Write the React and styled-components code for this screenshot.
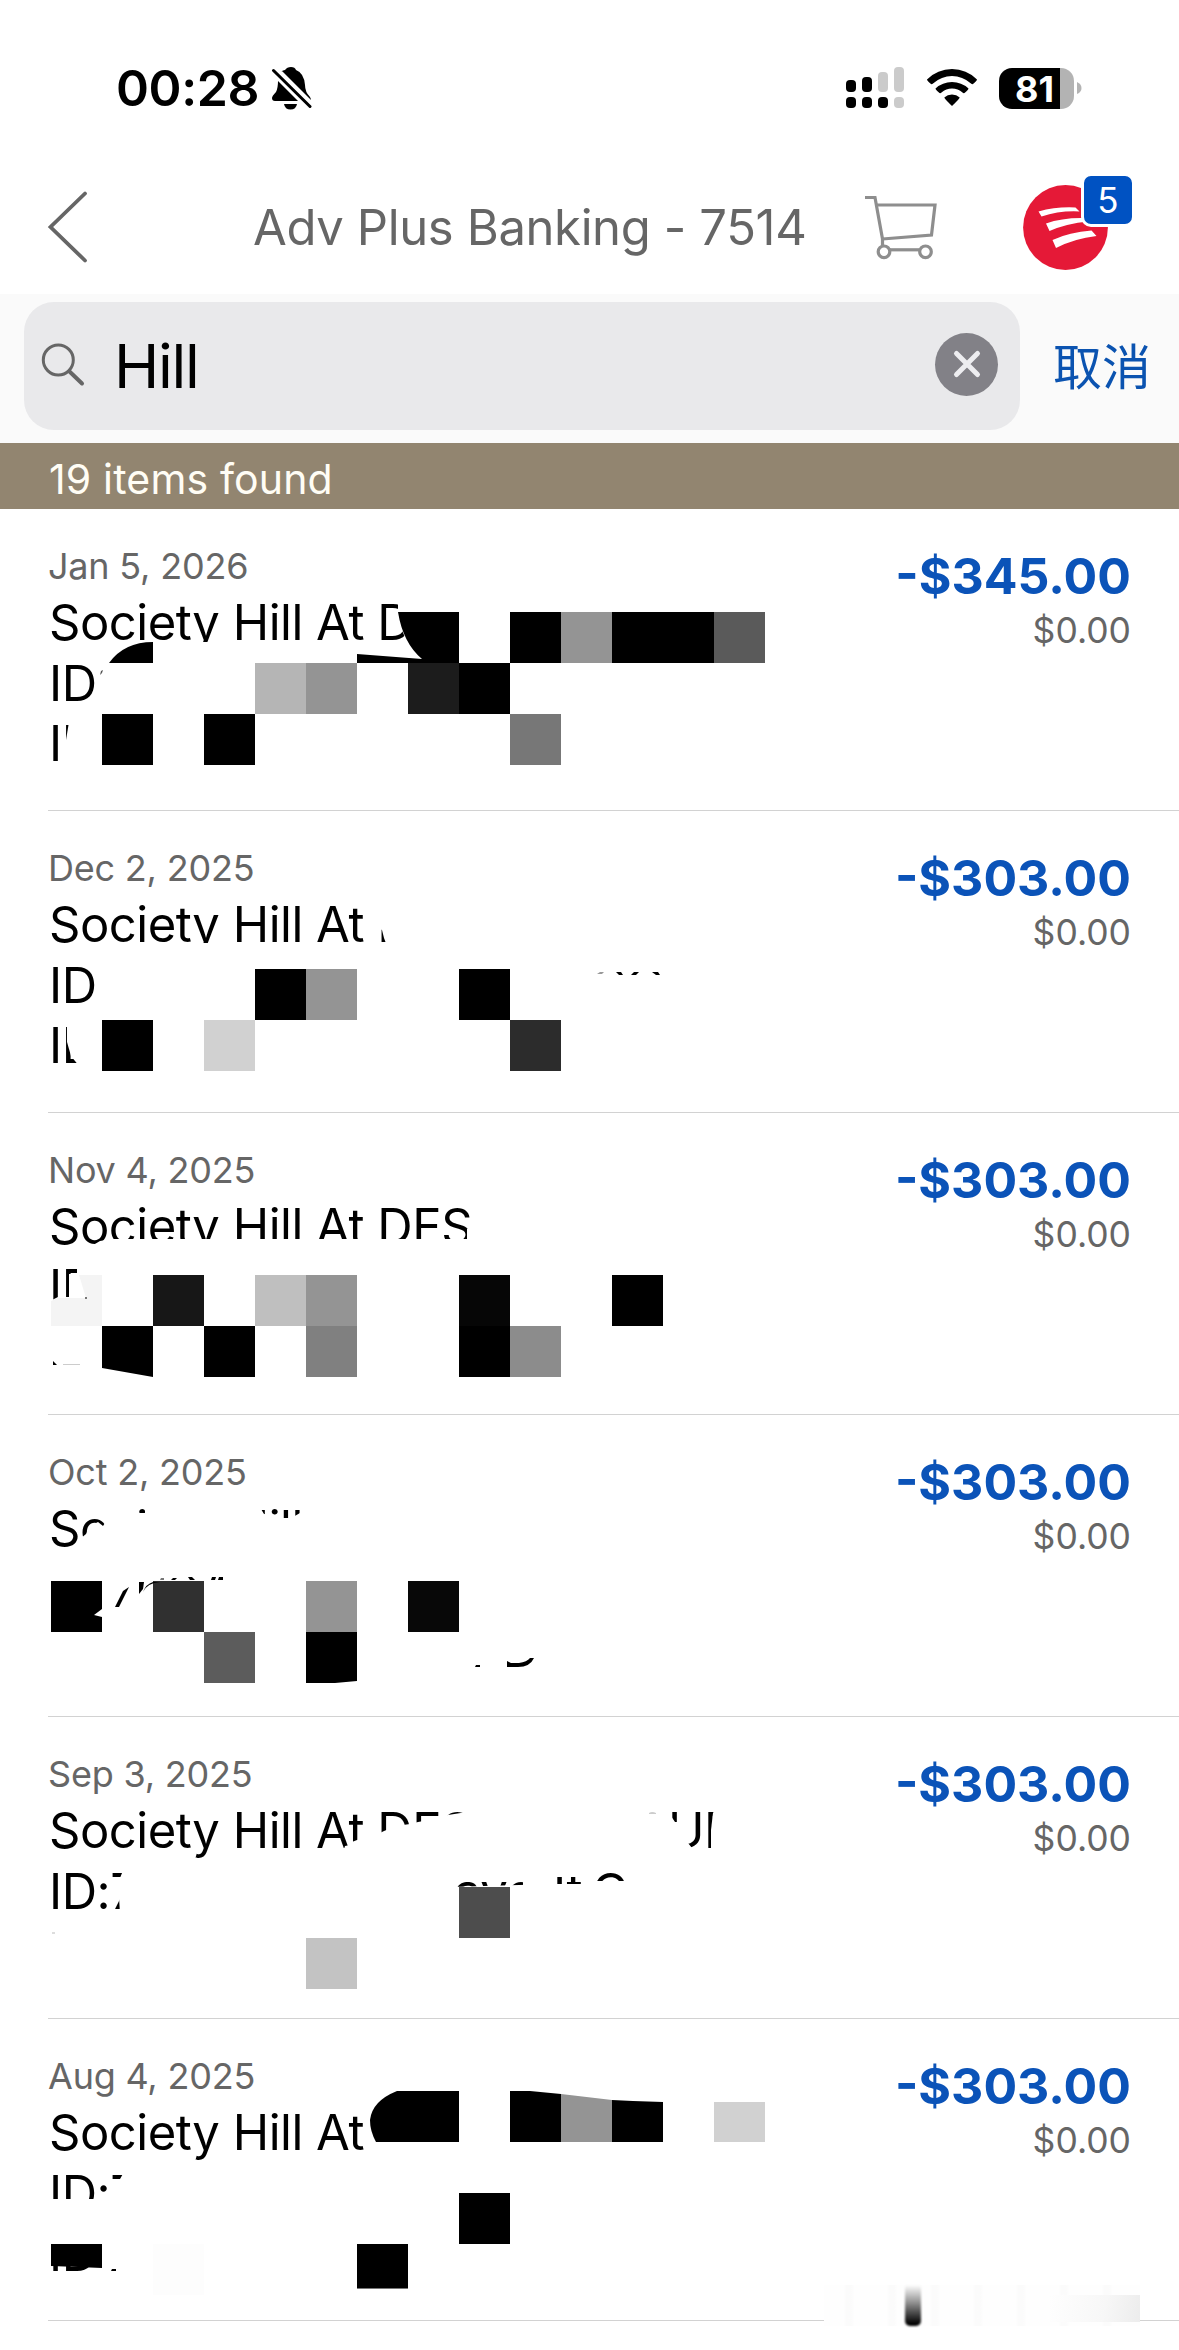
import React from 'react'
import styled, { createGlobalStyle } from 'styled-components'

const CELL = 51;
const LIST_TOP = 509;
const ROW_HEIGHT = 302;

// cells are [x, y, color] on the 51px mosaic grid, covers are painted white over the text
const transactions = [
  {
    date: "Jan 5, 2026",
    amount: "-$345.00",
    balance: "$0.00",
    lines: [[{ text: "Society Hill At D" }], [{ text: "ID" }], [{ text: "ID" }]],
    covers: [
      "190,642 300,642 300,660 190,660",
      "398,598 430,598 430,612 398,612",
      "398,612 401,628 407,642 422,659 430,612",
      "69,722 66,740 65,765 101,765 101,722",
    ],
    cells: [
      [510, 612, "#000"], [561, 612, "#949494"], [612, 612, "#000"], [663, 612, "#000"], [714, 612, "#5a5a5a"],
      [255, 663, "#b5b5b5"], [306, 663, "#949494"], [408, 663, "#1c1c1c"], [459, 663, "#000"],
      [102, 714, "#000"], [204, 714, "#000"], [510, 714, "#777"],
    ],
    shapes: [
      { d: "M109 663Q124 642 153 642V663Z" },
      { d: "M398 612H459V663H357V654L422 659Q403 643 398 612Z" },
      { d: "M100 675L101 671L103 670L102 673Z", fill: "#555" },
    ],
  },
  {
    date: "Dec 2, 2025",
    amount: "-$303.00",
    balance: "$0.00",
    lines: [[{ text: "Society Hill At D" }], [{ text: "ID" }], [{ text: "ID" }]],
    covers: [
      "190,943 300,943 300,962 190,962",
      "378,898 430,898 430,946 387,946 384,938 382,930 378,928",
      "67,1022 67,1042 71,1056 79,1066 101,1066 101,1022",
    ],
    cells: [
      [255, 969, "#000"], [306, 969, "#949494"], [459, 969, "#000"],
      [102, 1020, "#000"], [204, 1020, "#d1d1d1"], [510, 1020, "#2c2c2c"],
    ],
    shapes: [
      { d: "M597 974L600 972H604L602 974Z", fill: "#999" },
      { d: "M616 972L621 972L623 975H619Z" },
      { d: "M634 972H639L636 975H631Z" },
      { d: "M652 972H658L660 975H656Z" },
    ],
  },
  {
    date: "Nov 4, 2025",
    amount: "-$303.00",
    balance: "$0.00",
    lines: [[{ text: "Society Hill At DES" }], [{ text: "ID" }], []],
    covers: [
      "90,1247 100,1241 112,1239 500,1239 500,1264 90,1264",
      "467,1229 480,1229 480,1242 467,1242",
      "77,1264 102,1264 102,1310 50,1310 50,1301 58,1297 69,1297 69,1274 77,1274",
    ],
    cells: [
      [153, 1275, "#171717"], [255, 1275, "#bfbfbf"], [306, 1275, "#949494"], [459, 1275, "#060606"], [612, 1275, "#000"],
      [204, 1326, "#000"], [306, 1326, "#808080"], [459, 1326, "#000"], [510, 1326, "#8c8c8c"],
    ],
    shapes: [
      { d: "M51 1301L58 1298H86L79 1275H102V1326H51Z", fill: "#f4f4f4" },
      { d: "M102 1326H153V1377L102 1368Z" },
      { d: "M53 1361L57 1365H53Z" },
      { d: "M63 1364H80V1365H63Z", fill: "#ccc" },
      { d: "M85 1297H87V1299H85Z", fill: "#777" },
    ],
  },
  {
    date: "Oct 2, 2025",
    amount: "-$303.00",
    balance: "$0.00",
    lines: [[{ text: "Society Hill" }], [], []],
    covers: [
      "80,1539 86,1534 90,1526 98,1522 103,1526 107,1520 107,1500 134,1500 134,1513 145,1513 145,1504 232,1504 234,1510 241,1510 241,1504 258,1504 264,1514 278,1515 281,1518 289,1518 293,1517 300,1513 310,1500 310,1566 80,1566",
    ],
    cells: [
      [153, 1581, "#303030"], [306, 1581, "#949494"], [408, 1581, "#080808"],
      [204, 1632, "#5c5c5c"],
    ],
    shapes: [
      { d: "M51 1581H102V1609L94 1615L102 1617V1632H51Z" },
      { d: "M306 1632H357V1681L335 1683H306Z" },
      { d: "M115 1607L123 1591L129 1587L119 1607Z" },
      { d: "M139 1582H144L143 1589L139 1594Z" },
      { d: "M143 1592Q147 1583 160 1582L153 1582Q146 1584 143 1592Z" },
      { d: "M161 1578H164V1580H160Z", fill: "#777" },
      { d: "M173 1578H177L175 1580H171Z" },
      { d: "M188 1577H192L195 1580H190Z" },
      { d: "M212 1577H216L215 1580H211Z" },
      { d: "M219 1577H223V1580H218Z" },
      { d: "M476 1665H480V1667H475Z" },
      { d: "M507 1661L511 1663H519Q527 1662 530 1658H534Q530 1667 518 1667H507Z" },
    ],
  },
  {
    date: "Sep 3, 2025",
    amount: "-$303.00",
    balance: "$0.00",
    lines: [
      [{ text: "Society Hill At DES" }, { text: "UP", x: 668 }],
      [{ text: "ID:7" }, { text: "aye", x: 454 }, { text: "It", x: 553 }, { text: "C", x: 592 }],
      [],
    ],
    covers: [
      "343,1852 345,1846 350,1845 352,1842 357,1840 364,1838 380,1833 384,1831 396,1826 410,1824 418,1822 440,1818 448,1815 467,1812 474,1804 500,1804 500,1866 343,1866",
      "664,1815 671,1816 675,1822 688,1822 688,1843 692,1848 701,1846 705,1860 664,1860",
      "717,1806 713,1813 711,1830 711,1850 750,1850 750,1806",
      "124,1868 120,1878 110,1878 110,1897 119,1897 120,1914 150,1914 150,1868",
      "450,1887 520,1885 545,1884 545,1930 450,1930",
      "523,1876 545,1876 545,1890 523,1890",
      "550,1868 582,1868 582,1877 550,1877",
      "550,1884 582,1884 582,1916 550,1916",
      "590,1881 640,1881 640,1916 590,1916",
    ],
    cells: [[459, 1887, "#4d4d4d"], [306, 1938, "#c3c3c3"]],
    shapes: [
      { d: "M649 1813Q652 1811 656 1813V1814H649Z", fill: "#ccc" },
      { d: "M52 1932H55V1934H52Z", fill: "#ddd" },
    ],
  },
  {
    date: "Aug 4, 2025",
    amount: "-$303.00",
    balance: "$0.00",
    lines: [[{ text: "Society Hill At" }], [{ text: "ID:7" }], [{ text: "ID" }]],
    covers: [
      "48,2199 98,2199 98,2201 108,2201 108,2195 110,2179 120,2179 124,2172 150,2172 150,2216 48,2216",
      "48,2230 102,2230 102,2244 48,2244",
    ],
    cells: [
      [459, 2193, "#000"], [153, 2244, "#fdfdfd"],
    ],
    shapes: [
      { d: "M397 2091H459V2142H376Q370 2131 370 2120Q372 2101 397 2091Z" },
      { d: "M510 2091H530L561 2094V2142H510Z" },
      { d: "M561 2094L612 2100V2142H561Z", fill: "#949494" },
      { d: "M612 2100L633 2101L663 2102V2142H612Z" },
      { d: "M714 2102H765V2142H714Z", fill: "#d1d1d1" },
      { d: "M51 2244H102V2268L78 2267L51 2266Z" },
      { d: "M357 2244H408V2288H357Z" },
      { d: "M357 2288H408V2289H357Z", fill: "#777" },
      { d: "M112 2269H116V2271H111Z" },
    ],
  },
]

function Mosaic({ item, top }) {
  return (
    <Overlay viewBox={`0 ${top} 820 301`}>
      {item.covers.map((points) => <polygon key={points} points={points} fill="#fff" />)}
      {item.cells.map(([x, y, color]) => (
        <rect key={`${x}-${y}`} x={x} y={y} width={CELL} height={CELL} fill={color} shapeRendering="crispEdges" />
      ))}
      {item.shapes.map(({ d, fill }) => <path key={d} d={d} fill={fill || "#000"} />)}
    </Overlay>
  )
}

function Transaction({ item, index }) {
  return (
    <Row>
      <Details>
        <DateText>{item.date}</DateText>
        {item.lines.map((parts, i) => (
          <Line key={i}>
            {parts.map((part) => <Part key={part.text} $x={part.x}>{part.text}</Part>)}
          </Line>
        ))}
      </Details>
      <Amounts>
        <Amount>{item.amount}</Amount>
        <Balance>{item.balance}</Balance>
      </Amounts>
      <Mosaic item={item} top={LIST_TOP + index * ROW_HEIGHT} />
    </Row>
  )
}

function Status() {
  return (
    <StatusBar>
      <Time>00:28</Time>
      <svg width="42" height="46" viewBox="270 65 42 46">
        <path d="M279 73Q283 70 285 70Q287 67 291 67Q295 67 296 70Q304 73 305 85Q305 92 310 97Q311 99 311 100L282 71Z" />
        <path d="M278 81L298 101H275Q272 101 272 98Q272 96 276 92Q278 88 278 81Z" />
        <path d="M284 104H297Q296 109.500 290.500 109.500Q285 109.500 284 104Z" />
        <path d="M273.500 70.500L310 106.500" stroke="#fff" strokeWidth="6.500" />
        <path d="M273.500 70.500L310 106.500" stroke="#000" strokeWidth="3" strokeLinecap="round" />
      </svg>
      <StatusIcons>
        <svg width="60" height="44" viewBox="845 66 60 44">
          <rect x="846" y="80" width="10" height="12" rx="4" />
          <rect x="862" y="77" width="10" height="15" rx="4" />
          <rect x="878" y="72" width="10" height="20" rx="4" fill="#cbcbcb" />
          <rect x="894" y="67" width="10" height="25" rx="4" fill="#cbcbcb" />
          <rect x="846" y="97" width="10" height="11" rx="4" />
          <rect x="862" y="97" width="10" height="11" rx="4" />
          <rect x="878" y="97" width="10" height="11" rx="4" />
          <rect x="894" y="97" width="10" height="11" rx="4" fill="#cbcbcb" />
        </svg>
        <svg width="52" height="44" viewBox="925.500 66 52 44">
          <path d="M926.500 79.500Q937 69 951.500 69Q966 69 976.500 79.500Q976.500 80.500 972.500 84Q971.500 84.500 970.500 83.500Q962 76 951.500 76Q941 76 932.500 83.500Q931.500 84.500 930.500 84Q926.500 80.500 926.500 79.500Z" />
          <path d="M935 88.500Q942 82 951.500 82Q961 82 968 88.500Q968 89.500 964 93Q963 93.500 962 92.500Q957.500 88.500 951.500 88.500Q945.500 88.500 941 92.500Q940 93.500 939 93Q935 89.500 935 88.500Z" />
          <path d="M943.800 97.500Q947 94.500 951.500 94.500Q956 94.500 959.200 97.500Q959.500 98.300 951.500 106Q943.500 98.300 943.800 97.500Z" />
        </svg>
        <Battery>
          <span>81</span>
          <svg width="5" height="12" viewBox="0 0 5 12"><path d="M0 0Q4.500 2 4.500 6Q4.500 10 0 12Z" fill="#b3b3b3" /></svg>
        </Battery>
      </StatusIcons>
    </StatusBar>
  )
}

function Navigation() {
  return (
    <NavBar>
      <svg width="44" height="76" viewBox="46 188 44 76" fill="none" stroke="#666" strokeWidth="3.800" strokeLinecap="round">
        <path d="M85 192.500L50.500 226L85 259.500" />
      </svg>
      <Title>Adv Plus Banking - 7514</Title>
      <svg width="76" height="66" viewBox="862 194 76 66" fill="none" stroke="#8e8e8e" strokeWidth="3.200">
        <path d="M864 197.500H874L881.500 239V246" />
        <path d="M875.500 205H934L930.500 235L881.500 239" />
        <path d="M889 249.800H918" />
        <circle cx="883" cy="251.800" r="5.800" />
        <circle cx="924.500" cy="251.800" r="5.800" />
      </svg>
      <Profile>
        <svg width="85" height="85" viewBox="1022.500 184.500 85 85">
          <circle cx="1065" cy="227" r="42.400" fill="#e51937" />
          <path d="M1038 211Q1056 206 1075 207L1079 211Q1059 210 1041 216Z" fill="#fff" />
          <path d="M1045.500 223Q1062 217 1084 217.500L1088 221Q1066 223 1049 230.500Z" fill="#fff" />
          <path d="M1052 239.500Q1069 231.500 1091 230L1096 235.500Q1074 238 1055.500 247.500Z" fill="#fff" />
        </svg>
        <Badge>5</Badge>
      </Profile>
    </NavBar>
  )
}

function App() {
  return (
    <Screen>
      <GlobalStyle />
      <Status />
      <Navigation />
      <SearchBar>
        <SearchField>
          <svg width="46" height="46" viewBox="40 341 46 46" fill="none" stroke="#666" strokeLinecap="round">
            <circle cx="58.300" cy="360" r="15" strokeWidth="3" />
            <path d="M69.500 371.500L82 383.500" strokeWidth="4" />
          </svg>
          <Query>Hill</Query>
          <ClearButton>
            <svg width="30" height="30" viewBox="0 0 30 30" stroke="#ededf0" strokeWidth="5" strokeLinecap="round">
              <path d="M4.500 4.500L25.500 25.500M25.500 4.500L4.500 25.500" />
            </svg>
          </ClearButton>
        </SearchField>
        <Cancel>取消</Cancel>
      </SearchBar>
      <ResultBar>19 items found</ResultBar>
      {transactions.map((item, index) => (
        <Transaction key={item.date} item={item} index={index} />
      ))}
      <Smudge>
        <SmudgeMark />
        <SmudgeFade />
      </Smudge>
    </Screen>
  )
}

export default App

const GlobalStyle = createGlobalStyle`
  body {
    margin: 0;
    background: #fff;
  }
  * {
    box-sizing: border-box;
  }
  svg {
    display: block;
    flex: none;
  }
`
const Screen = styled.div`
  position: relative;
  width: 1179px;
  height: 2350px;
  overflow: hidden;
  background: #fff;
  font-family: Inter, "Noto Sans CJK SC", sans-serif;
  white-space: nowrap;
`
const StatusBar = styled.div`
  display: flex;
  align-items: center;
  height: 160px;
  padding: 16px 97px 0 116px;
`
const Time = styled.div`
  width: 154px;
  font-size: 50px;
  font-weight: 600;
  letter-spacing: -0.400px;
  line-height: 60px;
`
const StatusIcons = styled.div`
  display: flex;
  align-items: center;
  gap: 21px;
  margin-left: auto;
`
const Battery = styled.div`
  display: flex;
  align-items: center;
  gap: 3px;

  span {
    width: 75px;
    height: 41px;
    padding-left: 16px;
    border-radius: 13px;
    background: linear-gradient(to right, #000 61px, #b3b3b3 61px);
    color: #fff;
    font-size: 36px;
    font-weight: 700;
    line-height: 42px;
  }
`
const NavBar = styled.div`
  display: flex;
  align-items: center;
  height: 134px;
  padding-left: 46px;
`
const Title = styled.div`
  width: 610px;
  margin: 2px 0 0 163px;
  color: #666;
  font-size: 49px;
  letter-spacing: -0.380px;
  line-height: 60px;
`
const Profile = styled.div`
  position: relative;
  margin-left: 84px;
`
const Badge = styled.div`
  position: absolute;
  top: -12px;
  left: 58px;
  width: 54px;
  height: 54px;
  border: 3px solid #fff;
  border-radius: 10px;
  background: #0052c2;
  color: #fff;
  font-size: 35px;
  line-height: 48px;
  text-align: center;
`
const SearchBar = styled.div`
  display: flex;
  height: 149px;
  padding: 8px 0 0 24px;
  background: #fafafa;
`
const SearchField = styled.div`
  display: flex;
  align-items: center;
  width: 996px;
  height: 128px;
  padding: 0 22px 4px 16px;
  border-radius: 30px;
  background: #e9e9eb;
`
const Query = styled.div`
  flex: 1;
  margin: 3px 0 0 28px;
  font-size: 61px;
  letter-spacing: -1.300px;
  line-height: 74px;
`
const ClearButton = styled.div`
  display: flex;
  align-items: center;
  justify-content: center;
  width: 63px;
  height: 63px;
  border-radius: 50%;
  background: #828187;
`
const Cancel = styled.div`
  margin-left: 33px;
  color: #0b53b0;
  font-size: 49px;
  line-height: 131px;
`
const ResultBar = styled.div`
  height: 66px;
  padding-left: 49px;
  background: #928570;
  color: #fffdf5;
  font-size: 41px;
  letter-spacing: 0.150px;
  line-height: 73px;
`
const Row = styled.div`
  position: relative;
  display: flex;
  height: 302px;
  margin-left: 48px;
  padding-right: 48px;
  border-bottom: 1px solid #d2d2d2;
`
const Details = styled.div`
  flex: 1;
  padding-top: 35px;
`
const DateText = styled.div`
  margin-bottom: 5px;
  color: #666;
  font-size: 36px;
  letter-spacing: -0.200px;
  line-height: 44px;
`
const Line = styled.div`
  display: grid;
  height: 60.500px;
  font-size: 49px;
  letter-spacing: -0.480px;
  line-height: 60.500px;
`
const Part = styled.span`
  grid-area: 1 / 1;
  padding-left: ${({ $x }) => ($x ? $x - 48 : 1)}px;
`
const Amounts = styled.div`
  padding-top: 37px;
  text-align: right;
`
const Amount = styled.div`
  margin-bottom: 3px;
  color: #0b53b8;
  font-size: 50px;
  font-weight: 700;
  line-height: 60px;
`
const Balance = styled.div`
  color: #666;
  font-size: 35.500px;
  line-height: 43px;
`
const Overlay = styled.svg`
  position: absolute;
  top: 0;
  left: -48px;
  width: 820px;
  height: 301px;
`
const Smudge = styled.div`
  position: absolute;
  top: 2285px;
  left: 824px;
  display: flex;
  justify-content: space-between;
  width: 316px;
  height: 41px;
  padding-left: 81px;
  background: repeating-linear-gradient(to right, transparent 0 19px, rgba(0, 0, 0, 0.010) 22px 27px, transparent 31px 43px), #fefefe;
`
const SmudgeMark = styled.div`
  width: 16px;
  border-radius: 0 0 5px 5px;
  background: linear-gradient(#fff, #999 40%, #000 95%);
  filter: blur(0.800px);
`
const SmudgeFade = styled.div`
  width: 90px;
  height: 27px;
  margin-top: 10px;
  background: linear-gradient(100deg, #fefefe, #f7f7f7 60%, #ececec);
`
